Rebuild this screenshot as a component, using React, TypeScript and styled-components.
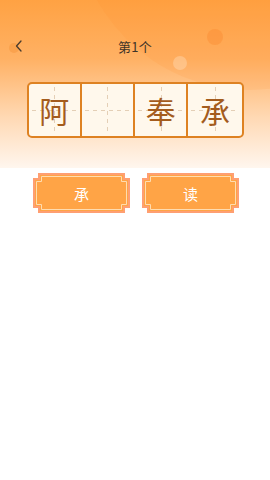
import React from 'react';
import styled, { createGlobalStyle } from 'styled-components';

const GlobalStyle = createGlobalStyle`
  html, body {
    margin: 0;
    padding: 0;
    background: #ffffff;
    font-family: "Noto Sans CJK SC", "Noto Sans", sans-serif;
  }
  * { box-sizing: border-box; }
`;

const Page = styled.div`
  width: 270px;
  min-height: 480px;
  background: #ffffff;
  overflow: hidden;
`;

const Header = styled.div`
  position: relative;
  height: 168px;
  padding-top: 30px;
  overflow: hidden;
  background: linear-gradient(180deg, #ffa243 0%, #ffb164 35%, #ffd9b4 70%, #fff6ee 100%);
`;

const Bubble = styled.div<{ $x: number; $y: number; $r: number; $c: string }>`
  position: absolute;
  left: ${({ $x, $r }) => $x - $r}px;
  top: ${({ $y, $r }) => $y - $r}px;
  width: ${({ $r }) => $r * 2}px;
  height: ${({ $r }) => $r * 2}px;
  border-radius: 50%;
  background: ${({ $c }) => $c};
`;

const NavBar = styled.div`
  position: relative;
  height: 32px;
  display: flex;
  align-items: center;
  justify-content: center;
`;

const Back = styled.div`
  position: absolute;
  left: 11px;
  top: 8px;
  width: 16px;
  height: 16px;
  display: flex;
  align-items: center;
  justify-content: center;
`;

const Title = styled.div`
  font-size: 13px;
  color: #3e3428;
  letter-spacing: 0.2px;
`;

const Grid = styled.div`
  position: relative;
  margin: 20px auto 0;
  width: 217px;
  height: 56px;
  display: grid;
  grid-template-columns: repeat(4, 1fr);
  border: 2px solid #de8222;
  border-radius: 5px;
  background: #fff8ec;
  overflow: hidden;
`;

const Cell = styled.div<{ $last?: boolean }>`
  position: relative;
  display: flex;
  align-items: center;
  justify-content: center;
  border-right: ${({ $last }) => ($last ? 'none' : '2px solid #de8222')};

  &::before {
    content: '';
    position: absolute;
    left: 3px;
    right: 3px;
    top: 50%;
    height: 1px;
    background: repeating-linear-gradient(90deg, #e4cfb6 0 4px, transparent 4px 8px);
  }

  &::after {
    content: '';
    position: absolute;
    top: 3px;
    bottom: 3px;
    left: 50%;
    width: 1px;
    background: repeating-linear-gradient(180deg, #e4cfb6 0 4px, transparent 4px 8px);
  }
`;

const Char = styled.span`
  position: relative;
  z-index: 1;
  font-size: 30px;
  line-height: 1;
  color: #a45c1d;
  font-family: "Noto Sans CJK SC", sans-serif;
`;

const Buttons = styled.div`
  display: flex;
  justify-content: center;
  gap: 12px;
  margin-top: 5px;
  padding-left: 2px;
`;

const Choice = styled.div`
  position: relative;
  width: 97px;
  height: 40px;
  display: flex;
  align-items: center;
  justify-content: center;
`;

const Frame = styled.svg`
  position: absolute;
  inset: 0;
`;

const ChoiceText = styled.span`
  position: relative;
  font-size: 15px;
  color: #ffffff;
`;

const notch = (w: number, h: number, i: number, n: number) =>
  [
    [i + n, i],
    [w - i - n, i],
    [w - i - n, i + n],
    [w - i, i + n],
    [w - i, h - i - n],
    [w - i - n, h - i - n],
    [w - i - n, h - i],
    [i + n, h - i],
    [i + n, h - i - n],
    [i, h - i - n],
    [i, i + n],
    [i + n, i + n],
  ]
    .map((p) => p.join(','))
    .join(' ');

const ChoiceButton: React.FC<{ label: string }> = ({ label }) => (
  <Choice>
    <Frame width="97" height="40" viewBox="0 0 97 40">
      <polygon points={notch(97, 40, 0, 5)} fill="#ff9f72" />
      <polygon points={notch(97, 40, 2, 5)} fill="#ffa446" />
      <polygon points={notch(97, 40, 3.5, 5)} fill="none" stroke="#ffdcb0" strokeWidth="1" />
    </Frame>
    <ChoiceText>{label}</ChoiceText>
  </Choice>
);

const chars = ['阿', '', '奉', '承'];

const App: React.FC = () => (
  <Page>
    <GlobalStyle />
    <Header>
      <Bubble $x={250} $y={-85} $r={175} $c="rgba(255,140,40,0.12)" />
      <Bubble $x={215} $y={37} $r={8} $c="rgba(250,140,50,0.45)" />
      <Bubble $x={180} $y={63} $r={7} $c="rgba(255,230,200,0.35)" />
      <Bubble $x={14} $y={48} $r={5} $c="rgba(245,150,60,0.5)" />
      <NavBar>
        <Back>
          <svg width="10" height="14" viewBox="0 0 10 14">
            <path d="M7 2 L2.5 7 L7 12" fill="none" stroke="#4a3c2e" strokeWidth="1.3" strokeLinecap="round" strokeLinejoin="round" />
          </svg>
        </Back>
        <Title>第1个</Title>
      </NavBar>
      <Grid>
        {chars.map((c, i) => (
          <Cell key={i} $last={i === chars.length - 1}>
            <Char>{c}</Char>
          </Cell>
        ))}
      </Grid>
    </Header>
    <Buttons>
      <ChoiceButton label="承" />
      <ChoiceButton label="读" />
    </Buttons>
  </Page>
);

export default App;
